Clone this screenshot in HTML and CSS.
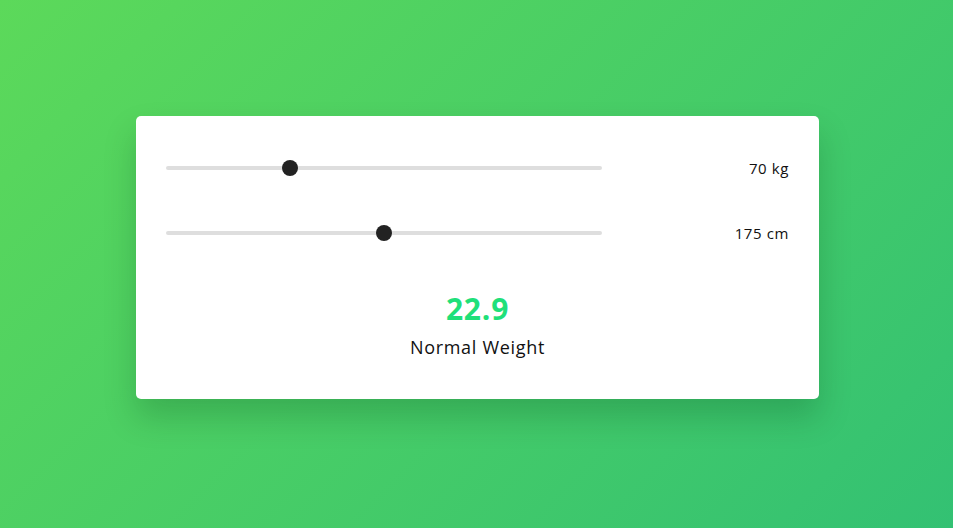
FILE: index.html
```html
<!DOCTYPE html>
<html lang="en">
<head>
<meta charset="utf-8">
<title>BMI Calculator</title>
<link rel="stylesheet" href="styles.css">
</head>
<body>
  <main class="card">
    <div class="row">
      <div class="slider">
        <div class="track"></div>
        <div class="thumb" style="left: 28.4%"></div>
      </div>
      <span class="value">70 kg</span>
    </div>
    <div class="row">
      <div class="slider">
        <div class="track"></div>
        <div class="thumb" style="left: 50%"></div>
      </div>
      <span class="value">175 cm</span>
    </div>
    <div class="result">
      <div class="bmi">22.9</div>
      <div class="status">Normal Weight</div>
    </div>
  </main>
</body>
</html>
```

FILE: styles.css
```css
html, body {
  margin: 0;
  height: 100%;
}
body {
  box-sizing: border-box;
  padding-left: 2px;
  background: linear-gradient(135deg, #5cd95a 0%, #33c173 100%);
  font-family: "Open Sans", "Liberation Sans", sans-serif;
  color: #111;
  overflow: hidden;
}
.card {
  box-sizing: border-box;
  width: 683px;
  height: 283px;
  margin: 116px auto 0;
  background: #fff;
  border-radius: 5px;
  box-shadow: 0 18px 32px rgba(0, 60, 20, 0.22);
  padding: 40px 30px 0;
  display: flex;
  flex-direction: column;
}
.row {
  display: flex;
  align-items: center;
  justify-content: space-between;
  height: 24px;
  margin-bottom: 41px;
}
.slider {
  position: relative;
  width: 436px;
  height: 16px;
  display: flex;
  align-items: center;
}
.track {
  width: 100%;
  height: 4px;
  border-radius: 2px;
  background: #dedede;
}
.thumb {
  position: absolute;
  top: 0;
  width: 16px;
  height: 16px;
  margin-left: -8px;
  border-radius: 50%;
  background: #222;
}
.value {
  font-size: 15px;
  letter-spacing: 0.6px;
}
.result {
  display: flex;
  flex-direction: column;
  align-items: center;
  margin-top: 3px;
}
.bmi {
  font-size: 30px;
  font-weight: 700;
  color: #1fe07a;
  line-height: 40px;
  letter-spacing: 0.8px;
}
.status {
  font-size: 18px;
  line-height: 26px;
  margin-top: 5px;
  letter-spacing: 0.7px;
}
```
